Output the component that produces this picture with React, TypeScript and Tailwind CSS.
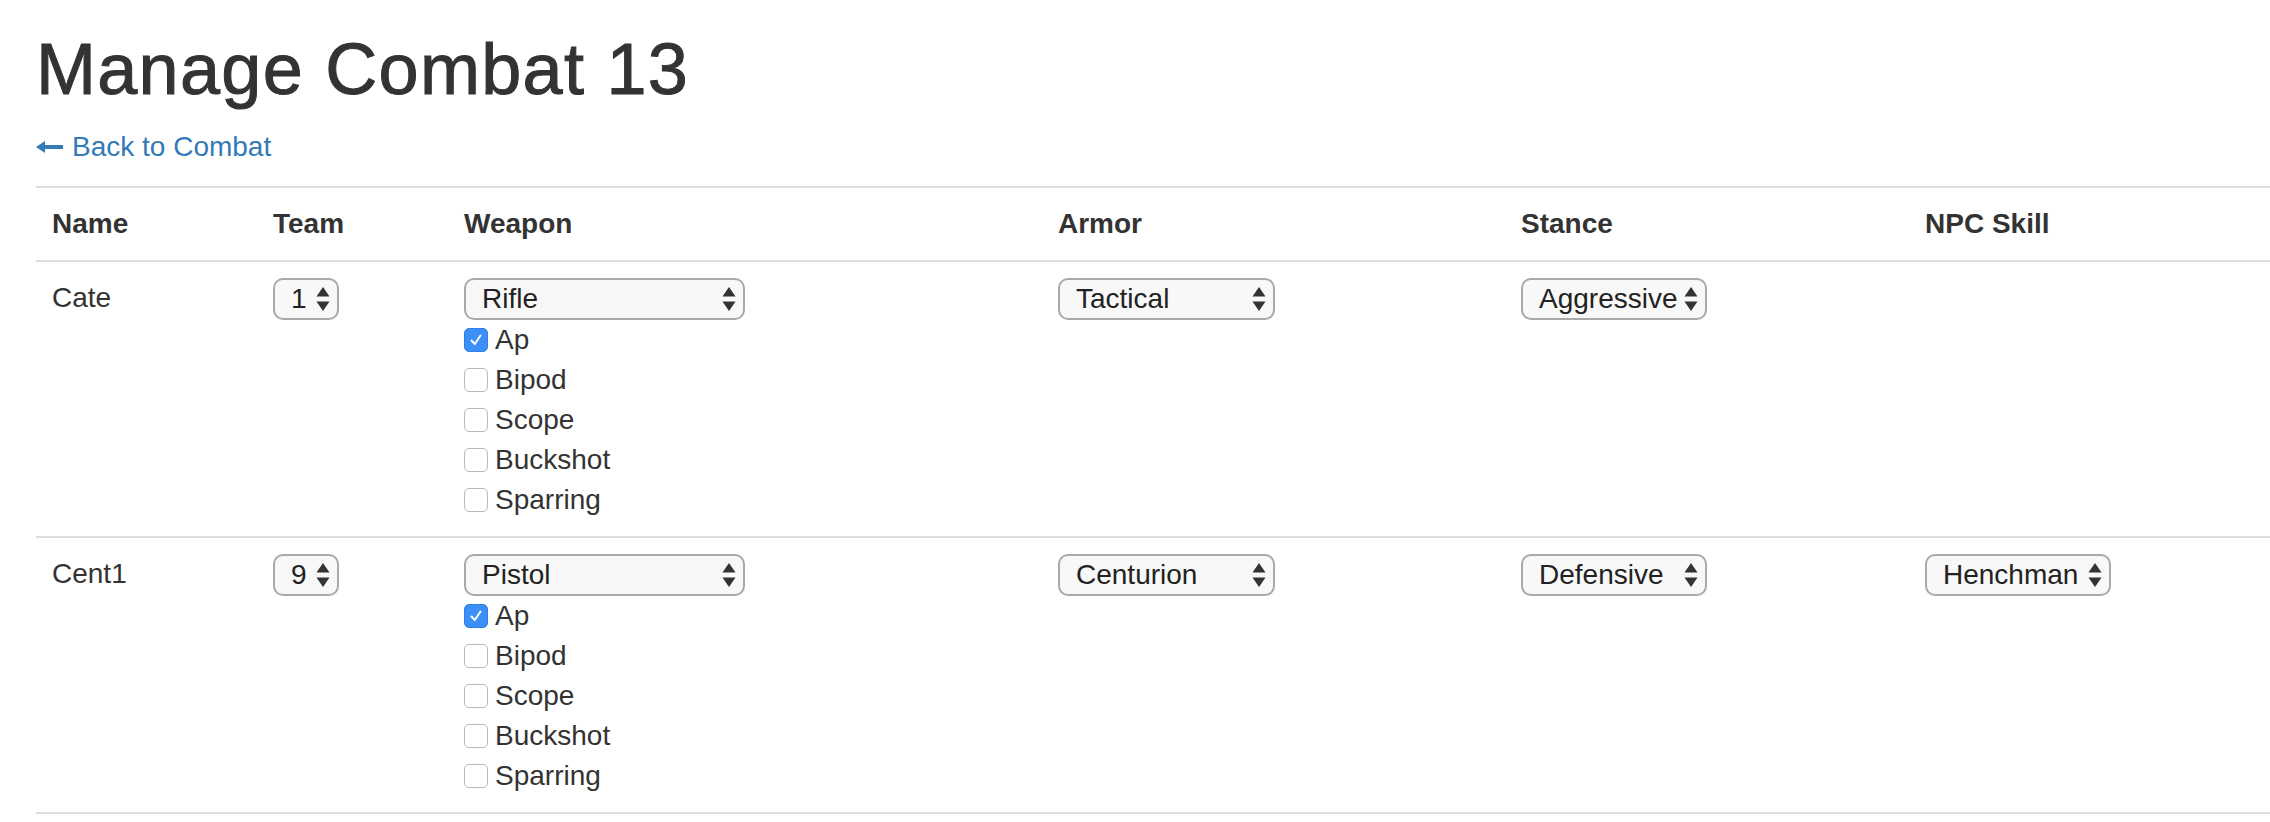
import React from "react";

function Arrows() {
  return (
    <svg width="14" height="24" viewBox="0 0 14 24" className="shrink-0">
      <path d="M7 0 L13.5 9.5 H0.5 Z" fill="#333" />
      <path d="M0.5 14.5 H13.5 L7 24 Z" fill="#333" />
    </svg>
  );
}

function Sel({ value, className }: { value: string; className: string }) {
  return (
    <div
      className={`flex h-[42px] items-center justify-between rounded-[10px] border-2 border-[#a9a9a9] bg-[#f8f8f8] pl-[16px] pr-[7px] text-[28px] leading-[40px] text-[#222] ${className}`}
    >
      <span>{value}</span>
      <Arrows />
    </div>
  );
}

function Check({ label, checked }: { label: string; checked?: boolean }) {
  return (
    <div className="flex h-[40px] items-center gap-[7px]">
      {checked ? (
        <div className="flex h-[24px] w-[24px] items-center justify-center rounded-[5px] border border-[#2f80ea] bg-[#3b8ff7]">
          <svg width="14" height="14" viewBox="0 0 14 14">
            <path d="M2.5 7.5 L5.8 11 L11.5 2.5" stroke="#fff" strokeWidth="2" fill="none" strokeLinecap="round" strokeLinejoin="round" />
          </svg>
        </div>
      ) : (
        <div className="h-[24px] w-[24px] rounded-[5px] border border-[#b9b9b9] bg-white" />
      )}
      <span>{label}</span>
    </div>
  );
}

const mods = ["Ap", "Bipod", "Scope", "Buckshot", "Sparring"];

function Row({
  name,
  team,
  weapon,
  armor,
  stance,
  npc,
}: {
  name: string;
  team: string;
  weapon: string;
  armor: string;
  stance: string;
  npc?: string;
}) {
  return (
    <div className="grid grid-cols-[221px_191px_594px_463px_406px_1fr] border-b-2 border-[#dddddd]">
      <div className="px-[16px] pt-[16px] pb-[16px] leading-[40px]">{name}</div>
      <div className="px-[16px] pt-[16px]">
        <Sel value={team} className="w-[66px]" />
      </div>
      <div className="px-[16px] pt-[16px] pb-[16px]">
        <Sel value={weapon} className="w-[281px]" />
        {mods.map((m, i) => (
          <Check key={m} label={m} checked={i === 0} />
        ))}
      </div>
      <div className="px-[16px] pt-[16px]">
        <Sel value={armor} className="w-[217px]" />
      </div>
      <div className="px-[16px] pt-[16px]">
        <Sel value={stance} className="w-[186px]" />
      </div>
      <div className="px-[14px] pt-[16px]">
        {npc ? <Sel value={npc} className="w-[186px]" /> : null}
      </div>
    </div>
  );
}

export default function App() {
  return (
    <div
      className="h-[822px] w-[2270px] overflow-hidden bg-white pl-[36px] text-[28px] leading-[40px] text-[#333]"
      style={{ fontFamily: '"Liberation Sans", Arial, sans-serif' }}
    >
      <h1 className="mt-[30px] text-[72px] font-medium leading-[79px] tracking-[1.3px] text-[#333] [-webkit-text-stroke:1px_#333]">
        Manage Combat 13
      </h1>
      <a href="#" className="mt-[18px] flex items-center gap-[9px] text-[#337ab7]">
        <svg width="27" height="14" viewBox="0 0 27 14" className="shrink-0">
          <rect x="7" y="5" width="20" height="4" fill="#337ab7" />
          <path d="M0 7 L9 1 V13 Z" fill="#337ab7" />
        </svg>
        <span>Back to Combat</span>
      </a>
      <div className="mt-[19px] border-t-2 border-[#dddddd]">
        <div className="grid grid-cols-[221px_191px_594px_463px_406px_1fr] border-b-2 border-[#dddddd] font-bold">
          <div className="p-[16px]">Name</div>
          <div className="p-[16px]">Team</div>
          <div className="p-[16px]">Weapon</div>
          <div className="p-[16px]">Armor</div>
          <div className="p-[16px]">Stance</div>
          <div className="px-[14px] py-[16px]">NPC Skill</div>
        </div>
        <Row name="Cate" team="1" weapon="Rifle" armor="Tactical" stance="Aggressive" />
        <Row name="Cent1" team="9" weapon="Pistol" armor="Centurion" stance="Defensive" npc="Henchman" />
      </div>
    </div>
  );
}
